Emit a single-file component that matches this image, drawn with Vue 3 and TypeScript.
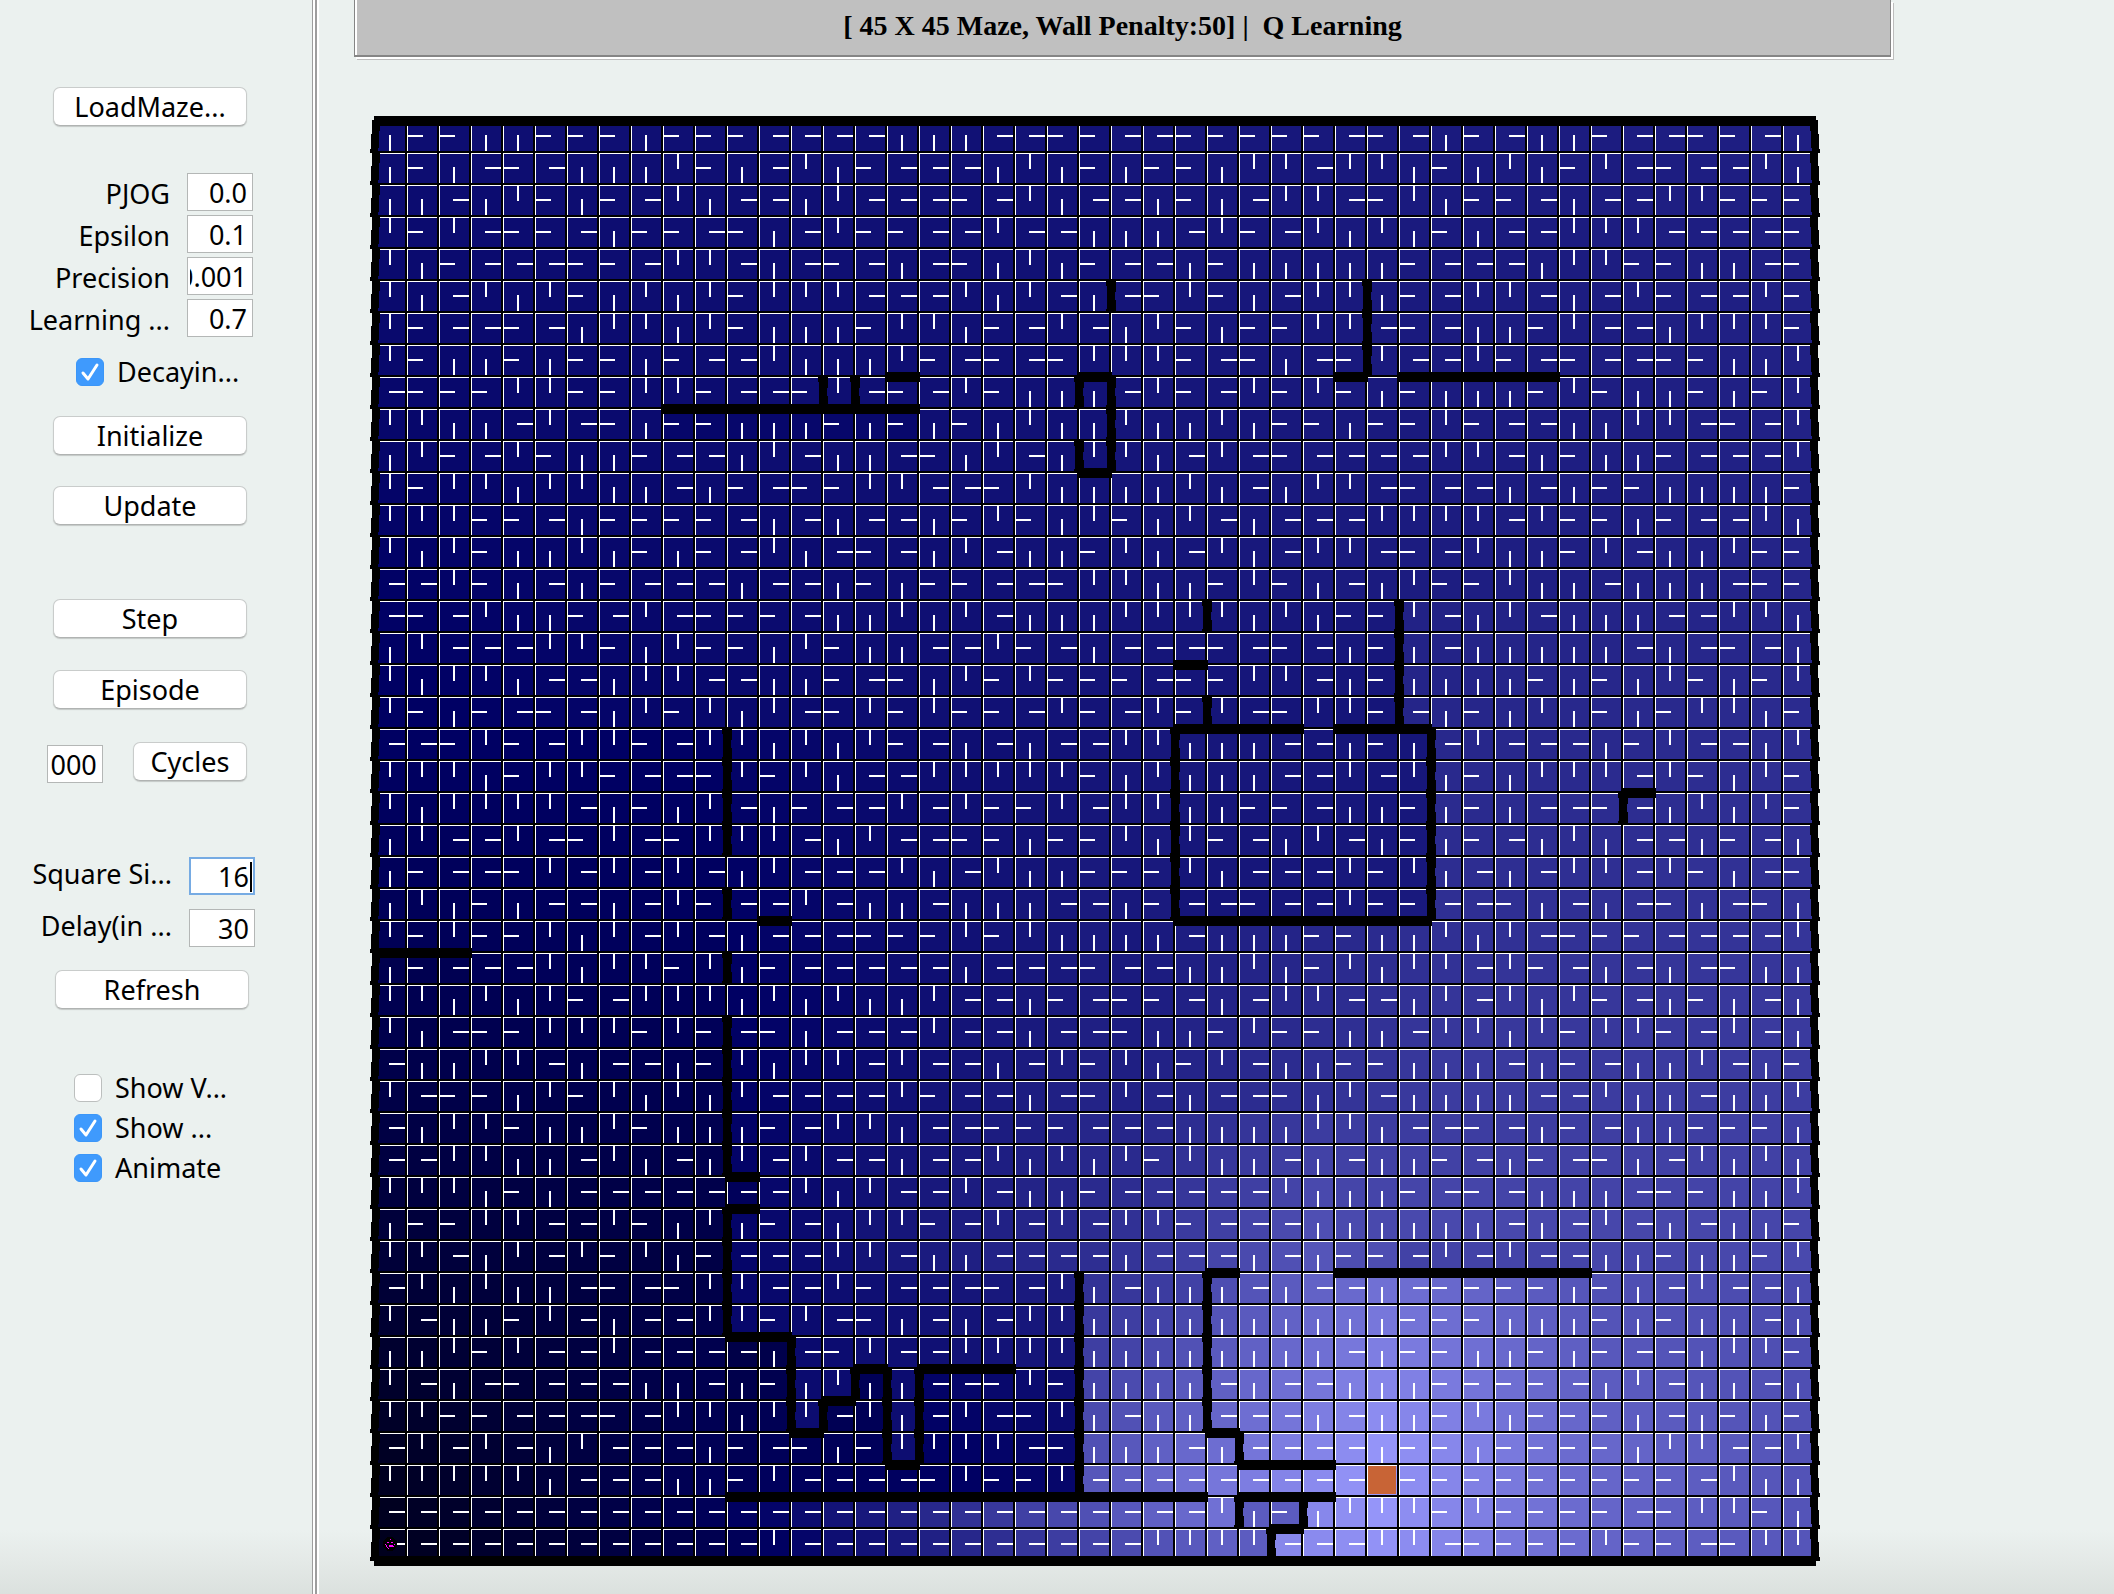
<script setup lang="ts">
import { onMounted, ref } from 'vue'

const CELL = 32
const N = 45
const SIZE = N * CELL

// Greedy policy per cell, one string per maze row: U, D, L, R, or '.' at the goal.
const policy: string[] = [
  'DLLDDLLLDLLLRRRRDDDRRLL' + 'RRLLLLLRLRDLRDDLRRLLRD',
  'DLDRLRDDDULDRUDLRRRDUDL' + 'DLLDUURUUDLDUDLURLRRUD',
  'DDRDULDLRUDRRDURRRLRUDR' + 'RDLDRUURLUDLLRDRRUULLL',
  'ULURLLRDLLRLDRULLRRURRD' + 'DDRULRUDUDLDRRUUURRRRL',
  'UDLRRRLLRUURDRLRDRLDUDL' + 'RRDLDDDDDLRRRDUULLDDRL',
  'UDRUDULDUDULUUURRRUDURD' + 'RLULDRUUDLRUURDRULRRUL',
  'ULRRLRDUUDULDDDLUUDLRUR' + 'DULDLLUURLRDDLURRDUUUL',
  'ULDDLDLLDLRRUDDDULRLRLU' + 'UULRLDRLURRULRLRRLLDDU',
  'RLLLUULLUULRRLURLRULDDD' + 'RULRULULDLDDDLULDDLDLU',
  'UUDDRURLDLLDDDLDLDLDUDD' + 'UDDUDLLDLLULRRDDUURLRU',
  'DULRULDDLRRDURDDRLDURDU' + 'UDRURLRRRRUURDLDDLRRRU',
  'ULUUDUUDDRDLRLLUURRLUDD' + 'DDUDRDUURLRRDRDLLDDDDL',
  'UUULLRDLLLLRDRDRRDLULDU' + 'LDURDRRRUUUURULLDLRRUD',
  'UDULDDUDLDLRUDRLRDURDDL' + 'UDRUDRUURLRUDDLURDDULL',
  'RRULDRDLRRRDRRDLDLLRRLU' + 'UDDLULDRDULLUDDRDDDRLL',
  'RLRUDDLRURLLLRDDUDURDDD' + 'UUUUDUDLLURDURDDDRRUUD',
  'DURRRUULDULLDULDDRRULRD' + 'RRRLRLRDLDRDDDDDRDRLRD',
  'UDUUDRRDUURRDDLRLDULULL' + 'LRLLUURDLDDDDLDLDULDLU',
  'ULDLRLRDULUDURLULULLRUL' + 'RULURLUULRDLDUDLDLUUDL',
  'RRLULRUULRUUDUDULRDRDRR' + 'UUDDDRRDLDRURRRDLURRDU',
  'UUUDLUULRRLULUDRRUUUUUL' + 'DUDDDRRURUDLDUUURULDUL',
  'UDUUUURDLDURDLRRURULLUR' + 'UUDDLLRDDLDLDRRLRDUDUL',
  'DURRURLURLUUURDURRLLDLL' + 'UDULRDURDLDLRDUDRRDLRD',
  'DLRRLURURURDURRRUDRUDDL' + 'LLUDRRRULUDRDRUURULDRL',
  'DUDLDRRDRULRRURDDRDDDRR' + 'DLRRLRRULLRRLDRDRLDRLD',
  'ULULLUDURURDRRRLLLULUDD' + 'DDRDDDLLDDUDURLLLRRRRU',
  'DLRRRUDUULUDLRRRRRDRRRL' + 'RRDDUDLUDUURULRDRDRLDD',
  'UUDUDULRUUUDUDUDDURRDLR' + 'LLRDRUURRDURUDULRDLDRD',
  'UDRLLUUULULRLDRRRURRDRR' + 'LDDLULLDDRUUDULUULRURD',
  'RDDUURDRRDLUDUURURRDRUL' + 'UDLURDDLLDDDRDLRDDURDL',
  'URLLDULUDUDURRRRULRRDRL' + 'URDRRLDURDDDDRRUDDRDDU',
  'RDUULDDULDDDLRUUDRRLLLR' + 'RRDDDDUUDRRLRDLRDDLLLD',
  'RRUUDDRUDRDURURRDRRUDUD' + 'ULUDDRDRDDLRDLRLDRUDUD',
  'UUUDLDRRRRRRRUDURRURDDL' + 'RRRRRUDDDLRLRDDDRLLDDU',
  'DLLUURRULDUDLRDUULRURUR' + 'UULRRRDDDDDDRDRURDRDDL',
  'UURDURULUDLRRRU' + 'URDDRRRRDRR' + 'RDRDLLRURURRDDLDDLU',
  'RUDUDDRLRLUURRU' + 'LRRRLRUDRDD' + 'DRDRRDRLLLLDLDRURRD',
  'URDDLURDRRUULUR' + 'LDRDRUUDDDD' + 'DDDDDDLLLDDDLDLDDRD',
  'DDULURRURRRRDRL' + 'URRUUUUDDDD' + 'DDDDRDLLDDLDLRRDUUL',
  'URDRLRRRDDRDLDU' + 'DDRRLULDDDD' + 'RDRRDDDLLLLRDURDDRD',
  'UULLRRRLRUUDUUR' + 'UDRURLUDRDD' + 'RRRDRDDLUDLLLDRDLDL',
  'RURURDURRRDLRLD' + 'LUUUURLDDDR' + 'DRRRRDLLDLLLLDUURRU',
  'UUUUUDRRRDDLURR' + 'RRLULLURRRR' + 'RRRRR.LLLLLLLLLRUDD',
  'RRRRRRRRRRRRRRR' + 'RRRRRRRRRRR' + 'UDLDUUULULLLLRLUULD',
  'RRRRRRRRRRRRURR' + 'RRRRRRRRRUU' + 'UURRRUURLLLLULLRLUU',
]

// Learned value surface: x0, y0, x1, y1 (inclusive cells) and the four corner values.
type Patch = [number, number, number, number, number, number, number, number]
const patches: Patch[] = [
  [0, 0, 22, 10, 113, 118, 106, 118],
  [23, 0, 44, 10, 121, 131, 121, 134],
  [9, 9, 16, 9, 106, 108, 106, 108],
  [0, 11, 22, 18, 104, 119, 98, 120],
  [23, 11, 44, 18, 121, 134, 121, 143],
  [32, 15, 44, 18, 134, 138, 137, 143],
  [23, 15, 31, 18, 121, 124, 121, 121],
  [0, 19, 10, 26, 98, 101, 84, 93],
  [0, 26, 2, 26, 78, 82, 78, 82],
  [0, 27, 10, 34, 80, 90, 59, 73],
  [0, 35, 10, 42, 57, 70, 33, 88],
  [11, 19, 22, 26, 103, 120, 100, 128],
  [11, 27, 22, 35, 99, 129, 105, 146],
  [11, 33, 11, 33, 90, 90, 90, 90],
  [23, 19, 33, 25, 121, 140, 124, 148],
  [34, 19, 44, 25, 139, 145, 148, 153],
  [25, 19, 32, 24, 123, 122, 121, 125],
  [23, 25, 33, 30, 124, 148, 133, 160],
  [34, 25, 44, 30, 149, 153, 160, 161],
  [23, 31, 29, 35, 138, 160, 152, 185],
  [30, 31, 44, 35, 160, 163, 178, 172],
  [32, 35, 44, 35, 166, 173, 166, 173],
  [11, 36, 21, 38, 106, 128, 108, 122],
  [11, 38, 12, 42, 72, 75, 88, 92],
  [13, 38, 13, 40, 110, 110, 112, 112],
  [14, 39, 14, 39, 112, 112, 112, 112],
  [14, 40, 15, 42, 84, 86, 92, 94],
  [15, 39, 15, 39, 86, 86, 86, 86],
  [16, 39, 16, 41, 112, 112, 113, 113],
  [17, 39, 21, 42, 103, 113, 97, 106],
  [13, 41, 13, 42, 88, 88, 92, 92],
  [16, 42, 16, 42, 95, 95, 95, 95],
  [22, 36, 25, 42, 150, 165, 186, 212],
  [26, 36, 31, 40, 177, 212, 202, 240],
  [32, 36, 37, 40, 209, 186, 234, 203],
  [38, 36, 44, 40, 180, 174, 196, 180],
  [26, 41, 31, 42, 209, 248, 218, 252],
  [32, 41, 37, 44, 242, 207, 240, 207],
  [38, 41, 44, 44, 203, 182, 200, 185],
  [0, 43, 10, 44, 32, 88, 30, 80],
  [11, 43, 14, 44, 96, 119, 88, 114],
  [15, 43, 26, 44, 124, 212, 118, 196],
  [27, 43, 28, 44, 191, 191, 192, 235],
  [29, 43, 31, 44, 235, 249, 238, 246],
]

const values: number[][] = Array.from({ length: N }, () => Array<number>(N).fill(100))
for (const [x0, y0, x1, y1, tl, tr, bl, br] of patches) {
  for (let y = y0; y <= y1; y++) {
    for (let x = x0; x <= x1; x++) {
      const u = x1 > x0 ? (x - x0) / (x1 - x0) : 0
      const v = y1 > y0 ? (y - y0) / (y1 - y0) : 0
      values[y][x] = Math.round((tl * (1 - u) + tr * u) * (1 - v) + (bl * (1 - u) + br * u) * v)
    }
  }
}

function shade(v: number): string {
  const c = Math.max(0, v - 100)
  return `rgb(${c},${c},${v})`
}

interface Cell { x: number; y: number; fill: string; ax: number; ay: number; aw: number; ah: number }
const cells: Cell[] = []
for (let r = 0; r < N; r++) {
  for (let c = 0; c < N; c++) {
    const x = c * CELL
    const y = r * CELL
    const d = policy[r][c]
    const vertical = d === 'U' || d === 'D'
    cells.push({
      x, y,
      fill: shade(values[r][c]),
      ax: x + (d === 'L' ? 0 : 14),
      ay: y + (d === 'U' ? 0 : 14),
      aw: d === '.' ? 0 : vertical ? 2 : 16,
      ah: vertical ? 16 : 2,
    })
  }
}

// Horizontal walls: row line, start column, end column.
const hWalls: [number, number, number][] = [
  [8, 16, 17], [9, 9, 17], [8, 22, 23], [11, 22, 23], [8, 30, 31], [8, 32, 37],
  [17, 25, 26], [19, 25, 29], [19, 30, 33], [25, 25, 33], [21, 39, 40],
  [25, 12, 13], [26, 0, 3], [33, 11, 12], [34, 11, 12], [38, 11, 13],
  [41, 13, 14], [40, 14, 15], [39, 15, 16], [42, 16, 17], [39, 17, 20], [43, 11, 26],
  [36, 26, 27], [36, 30, 38], [41, 26, 27], [42, 27, 30], [43, 27, 30], [44, 28, 29],
]
// Vertical walls: column line, start row, end row.
const vWalls: [number, number, number][] = [
  [14, 8, 9], [15, 8, 9], [22, 8, 9], [22, 10, 11], [23, 8, 11], [23, 5, 6], [31, 5, 8],
  [26, 15, 16], [32, 15, 19], [26, 18, 19], [25, 19, 25], [33, 19, 25], [39, 21, 22],
  [11, 19, 23], [11, 24, 25], [11, 26, 27], [11, 28, 33], [11, 34, 38],
  [13, 38, 41], [14, 40, 41], [15, 39, 40], [16, 39, 42], [17, 39, 42], [22, 36, 43],
  [26, 36, 41], [27, 41, 42], [27, 43, 44], [29, 43, 44], [28, 44, 45],
]

const inner = 'h10v11h-1v8h1v13h-10v-4h1v-23h-1z'
const vPath = vWalls
  .flatMap(([c, a, b]) => Array.from({ length: b - a }, (_, i) => `M${c * CELL - 5} ${(a + i) * CELL}${inner}`))
  .join('')
const rows = Array.from({ length: N }, (_, i) => i * CELL)
const edgePath = rows
  .map((y) =>
    `M-3 ${y - 1}h8v11h-1v17h-1v5h-8v-4h1v-15h1z` +
    `M${SIZE + 3} ${y - 1}h-8v11h1v17h1v5h8v-4h-1v-15h-1z`)
  .join('')

interface Field { id: string; label: string; value: string }
const params = ref<Field[]>([
  { id: 'pjog', label: 'PJOG', value: '0.0' },
  { id: 'epsilon', label: 'Epsilon', value: '0.1' },
  { id: 'precision', label: 'Precision', value: '0.001' },
  { id: 'rate', label: 'Learning ...', value: '0.7' },
])
const cycles = ref('1000')
const squareSize = ref('16')
const delay = ref('30')
const decaying = ref(true)
const toggles = ref([
  { id: 'values', label: 'Show V...', on: false },
  { id: 'policy', label: 'Show ...', on: true },
  { id: 'animate', label: 'Animate', on: true },
])

const panel = ref<HTMLElement | null>(null)
onMounted(() => {
  panel.value?.querySelectorAll<HTMLInputElement>('input.box').forEach((el) => {
    el.scrollLeft = el.scrollWidth
  })
})
</script>

<template>
  <div class="app">
    <aside ref="panel" class="panel">
      <button class="btn" type="button">LoadMaze...</button>

      <div class="params">
        <div v-for="f in params" :key="f.id" class="row">
          <label :for="f.id">{{ f.label }}</label>
          <input :id="f.id" v-model="f.value" class="box" type="text" />
        </div>
      </div>

      <label class="check decay"><input v-model="decaying" type="checkbox" />Decayin...</label>
      <button class="btn init" type="button">Initialize</button>
      <button class="btn update" type="button">Update</button>
      <button class="btn step" type="button">Step</button>
      <button class="btn episode" type="button">Episode</button>

      <div class="cycles">
        <input v-model="cycles" class="box small" type="text" aria-label="Number of cycles" />
        <button class="btn narrow" type="button">Cycles</button>
      </div>

      <div class="display">
        <div class="row">
          <label for="square">Square Si...</label>
          <span class="focus"><input id="square" v-model="squareSize" class="box active" type="text" /><i class="caret"></i></span>
        </div>
        <div class="row">
          <label for="delay">Delay(in ...</label>
          <input id="delay" v-model="delay" class="box" type="text" />
        </div>
        <button class="btn refresh" type="button">Refresh</button>
      </div>

      <div class="toggles">
        <label v-for="t in toggles" :key="t.id" class="check"><input v-model="t.on" type="checkbox" />{{ t.label }}</label>
      </div>
    </aside>

    <div class="divider"></div>

    <main class="main">
      <h1 class="title">[ 45 X 45 Maze, Wall Penalty:50] |&nbsp; Q Learning</h1>
      <svg class="maze" :width="SIZE + 20" :height="SIZE + 20" :viewBox="`-10 -10 ${SIZE + 20} ${SIZE + 20}`" shape-rendering="crispEdges" role="img" aria-label="Maze">
        <rect x="0" y="0" :width="SIZE" :height="SIZE" fill="#000" />
        <g v-for="(c, i) in cells" :key="i">
          <rect :x="c.x" :y="c.y" width="30" height="30" fill="#fff" />
          <rect :x="c.x + 1" :y="c.y + 1" width="29" height="29" :fill="c.fill" />
          <rect :x="c.ax" :y="c.ay" :width="c.aw" :height="c.ah" fill="#fff" />
        </g>
        <rect :x="31 * CELL + 1" :y="42 * CELL + 1" width="28" height="28" fill="#c86436" />
        <path :d="vPath" />
        <path :d="edgePath" />
        <rect v-for="([r, a, b], i) in hWalls" :key="'h' + i" :x="a * CELL - 2" :y="r * CELL - 5" :width="(b - a) * CELL + 3" height="10" />
        <rect x="-1" y="-5" :width="SIZE + 2" height="10" />
        <rect x="-1" :y="SIZE - 5" :width="SIZE + 2" height="10" />
        <g :transform="`translate(8 ${44 * CELL + 8})`">
          <circle cx="7" cy="7" r="7" />
          <path fill="#ff00ff" d="M7 2h1v1h-1zM4 5h2v1h-2zM8 5h2v1h-2zM2 7h1v1h-1zM11 7h1v1h-1zM3 8h1v2h-1zM6 8h4v2h-4zM10 9h1v1h-1zM4 10h1v1h-1zM5 11h1v1h-1z" />
        </g>
      </svg>
    </main>
  </div>
</template>

<style>
body {
  background: #ebf1ef;
}
</style>

<style scoped>
.app {
  display: flex;
  min-height: 100vh;
  background: linear-gradient(to top, #dbe1de, #e4e9e7 32px, #ebf1ef 64px);
  color: #000;
  font-family: "Noto Sans", "Open Sans", sans-serif;
  font-size: 27px;
  line-height: 36px;
}
.panel {
  flex: none;
  box-sizing: border-box;
  width: 312px;
  padding: 87px 0 0 53px;
}
.divider {
  flex: none;
  width: 1px;
  background: #fff;
  border-left: 1px solid #9d9d9d;
  border-right: 2px solid #9d9d9d;
  padding-right: 1px;
  box-shadow: 2px 0 0 #fff;
}
.btn {
  display: block;
  box-sizing: border-box;
  width: 194px;
  height: 39px;
  padding: 0;
  border: 1px solid #c9cccb;
  border-bottom-color: #b0b3b2;
  border-radius: 7px;
  background: #fff;
  box-shadow: 0 1px 1px #c4c8c6;
  color: inherit;
  font: inherit;
  line-height: 37px;
}
.params {
  display: flex;
  flex-direction: column;
  gap: 4px;
  margin: 47px 0 0 -53px;
}
.row {
  display: flex;
  width: 253px;
  gap: 17px;
}
.row label {
  flex: 1;
  text-align: right;
  white-space: nowrap;
  line-height: 42px;
}
.box {
  box-sizing: border-box;
  width: 66px;
  height: 38px;
  padding: 0 5px 0 2px;
  border: 1px solid #b4b7b6;
  border-radius: 0;
  background: #fff;
  color: inherit;
  font: inherit;
  text-align: right;
  outline: none;
}
.params .row {
  height: 38px;
}
.small {
  width: 56px;
  margin-top: 3px;
}
.active {
  border: 2px solid #76abe3;
  padding-right: 4px;
}
.focus {
  position: relative;
  display: flex;
}
.caret {
  position: absolute;
  right: 3px;
  top: 5px;
  width: 2px;
  height: 30px;
  background: #000;
}
.check {
  display: flex;
  align-items: center;
  gap: 13px;
  height: 28px;
}
.check input {
  appearance: none;
  flex: none;
  box-sizing: border-box;
  width: 28px;
  height: 28px;
  margin: 0;
  border: 1px solid #bcbfbe;
  border-radius: 6px;
  background: #fff;
}
.check input:checked {
  border-color: #3b96f8;
  background: #3f9afd url("data:image/svg+xml,%3Csvg xmlns='http://www.w3.org/2000/svg' viewBox='0 0 26 26'%3E%3Cpath d='M6 14l5 6 9-14' fill='none' stroke='white' stroke-width='3' stroke-linecap='round' stroke-linejoin='round'/%3E%3C/svg%3E");
}
.decay {
  margin: 21px 0 0 23px;
}
.init {
  margin-top: 30px;
}
.update {
  margin-top: 31px;
}
.step {
  margin-top: 74px;
}
.episode {
  margin-top: 32px;
}
.cycles {
  display: flex;
  justify-content: space-between;
  width: 200px;
  margin: 33px 0 0 -6px;
}
.narrow {
  width: 114px;
}
.display {
  display: flex;
  flex-direction: column;
  gap: 14px;
  margin: 74px 0 0 -53px;
}
.display .row {
  width: 255px;
  height: 38px;
}
.display .row label {
  line-height: 34px;
}
.refresh {
  margin: 9px 0 0 55px;
}
.toggles {
  display: flex;
  flex-direction: column;
  gap: 12px;
  margin: 65px 0 0 21px;
}
.main {
  flex: 1;
  min-width: 0;
}
.title {
  box-sizing: border-box;
  height: 57px;
  margin: 0 223px 0 37px;
  border: solid #858585;
  border-width: 0 1px 2px;
  background: #c0c0c0;
  box-shadow: inset 2px 0 0 #fff, 2px 2px 0 #fff, 3px 3px 0 #bdbdbd;
  font-family: Georgia, "Liberation Serif", serif;
  font-size: 28px;
  font-weight: 700;
  line-height: 52px;
  text-align: center;
}
.maze {
  display: block;
  margin: 54px 0 0 48px;
}
</style>
